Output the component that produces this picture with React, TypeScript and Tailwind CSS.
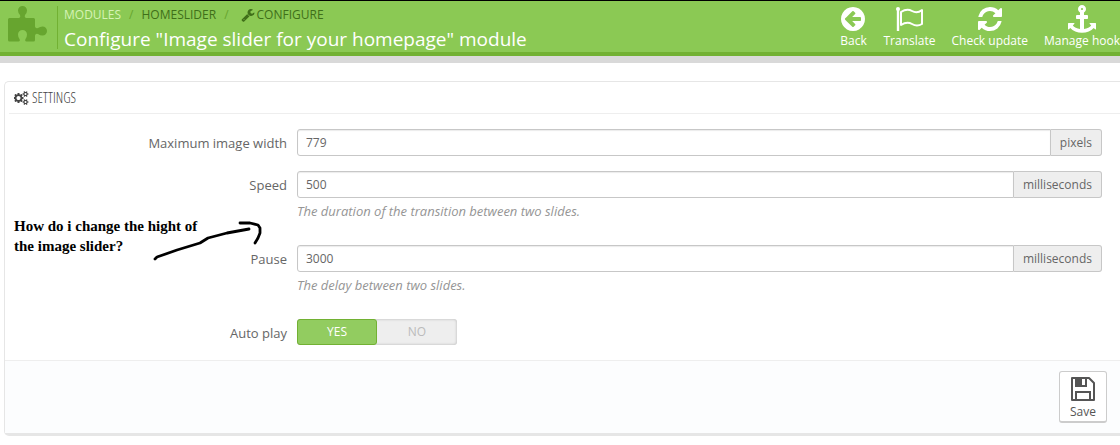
import type { ReactNode } from "react";

const ICONS = {
  back: "M1408 960v-128q0-26-19-45t-45-19h-502l189-189q19-19 19-45t-19-45l-91-91q-18-18-45-18t-45 18l-362 362-91 91q-18 18-18 45t18 45l91 91 362 362q18 18 45 18t45-18l91-91q18-18 18-45t-18-45l-189-189h502q26 0 45-19t19-45zm256-64q0 209-103 385.5t-279.5 279.5-385.5 103-385.5-103-279.5-279.5-103-385.5 103-385.5 279.5-279.5 385.5-103 385.5 103 279.5 279.5 103 385.5z",
  refresh:
    "M1639 1056q0 5-1 7-64 268-268 434.5t-478 166.5q-146 0-282.5-55t-243.5-157l-129 129q-19 19-45 19t-45-19-19-45v-448q0-26 19-45t45-19h448q26 0 45 19t19 45-19 45l-137 137q71 66 161 102t187 36q134 0 250-65t186-179q11-17 53-117 8-23 30-23h192q13 0 22.5 9.5t9.5 22.5zm25-800v448q0 26-19 45t-45 19h-448q-26 0-45-19t-19-45 19-45l138-138q-148-137-349-137-134 0-250 65t-186 179q-11 17-53 117-8 23-30 23h-199q-13 0-22.5-9.5t-9.5-22.5v-7q65-268 270-434.5t480-166.5q146 0 284 55.5t245 156.5l130-129q19-19 45-19t45 19 19 45z",
  anchor:
    "M960 256q0-26-19-45t-45-19-45 19-19 45 19 45 45 19 45-19 19-45zm832 928v352q0 22-20 30-8 2-12 2-13 0-23-9l-93-93q-119 143-318.5 226.5t-429.5 83.5-429.5-83.5-318.5-226.5l-93 93q-9 9-23 9-4 0-12-2-20-8-20-30v-352q0-14 9-23t23-9h352q22 0 30 20 8 19-7 35l-100 100q67 91 189.5 153.5t271.5 82.5v-647h-192q-26 0-45-19t-19-45v-128q0-26 19-45t45-19h192v-163q-58-34-93-92.5t-35-128.5q0-106 75-181t181-75 181 75 75 181q0 70-35 128.5t-93 92.5v163h192q26 0 45 19t19 45v128q0 26-19 45t-45 19h-192v647q149-20 271.5-82.5t189.5-153.5l-100-100q-15-16-7-35 8-20 30-20h352q14 0 23 9t9 23z",
  wrench:
    "M448 1472q0-26-19-45t-45-19-45 19-19 45 19 45 45 19 45-19 19-45zm644-420l-682 682q-37 37-90 37-52 0-91-37l-106-108q-38-36-38-90 0-53 38-91l681-681q39 98 114.5 173.5t173.5 114.5zm634-435q0 39-23 106-47 134-164.5 217.5t-258.5 83.5q-185 0-316.5-131.5t-131.5-316.5 131.5-316.5 316.5-131.5q58 0 121.5 16.5t107.5 46.5q16 11 16 28t-16 28l-293 169v224l193 107q5-3 79-48.5t135.5-81 70.5-35.5q15 0 23.5 10t8.5 25z",
  cogs: "M832 896q0-106-75-181t-181-75-181 75-75 181 75 181 181 75 181-75 75-181zm768 512q0-52-38-90t-90-38-90 38-38 90q0 53 37.5 90.5t90.5 37.5 90.5-37.5 37.5-90.5zm0-1024q0-52-38-90t-90-38-90 38-38 90q0 53 37.5 90.5t90.5 37.5 90.5-37.5 37.5-90.5zm-384 421v185q0 10-7 19.5t-16 10.5l-155 24q-11 35-32 76 34 48 90 115 7 11 7 20 0 12-7 19-23 30-82.5 89.5t-78.5 59.5q-11 0-21-7l-115-90q-37 19-77 31-11 108-23 155-7 24-30 24h-186q-11 0-20-7.5t-10-17.5l-23-153q-34-10-75-31l-118 89q-7 7-20 7-11 0-21-8-144-133-144-160 0-9 7-19 10-14 41-53t47-61q-23-44-35-82l-152-24q-10-1-17-9.5t-7-19.5v-185q0-10 7-19.5t16-10.5l155-24q11-35 32-76-34-48-90-115-7-11-7-20 0-12 7-20 22-30 82-89t79-59q11 0 21 7l115 90q34-18 77-32 11-108 23-154 7-24 30-24h186q11 0 20 7.5t10 17.5l23 153q34 10 75 31l118-89q8-7 20-7 11 0 21 8 144 133 144 160 0 8-7 19-12 16-42 54t-45 60q23 48 34 82l152 23q10 2 17 10.5t7 19.5zM1856 1338v140q0 16-149 31-12 27-30 52 51 113 51 138 0 4-4 7-122 71-124 71-8 0-46-47t-52-68q-20 2-30 2t-30-2q-14 21-52 68t-46 47q-2 0-124-71-4-3-4-7 0-25 51-138-18-25-30-52-149-15-149-31v-140q0-16 149-31 13-29 30-52-51-113-51-138 0-4 4-7 4-2 35-20t59-34 30-16q8 0 46 46.5t52 67.5q20-2 30-2t30 2q51-71 92-112l6-2q4 0 124 70 4 3 4 7 0 25-51 138 17 23 30 52 149 15 149 31zM1856 314v140q0 16-149 31-12 27-30 52 51 113 51 138 0 4-4 7-122 71-124 71-8 0-46-47t-52-68q-20 2-30 2t-30-2q-14 21-52 68t-46 47q-2 0-124-71-4-3-4-7 0-25 51-138-18-25-30-52-149-15-149-31v-140q0-16 149-31 13-29 30-52-51-113-51-138 0-4 4-7 4-2 35-20t59-34 30-16q8 0 46 46.5t52 67.5q20-2 30-2t30 2q51-71 92-112l6-2q4 0 124 70 4 3 4 7 0 25-51 138 17 23 30 52 149 15 149 31z",
};

function Icon({ name, className }: { name: keyof typeof ICONS; className: string }) {
  return (
    <svg viewBox={name === "cogs" ? "0 0 1920 1792" : "0 0 1792 1792"} fill="currentColor" className={className} aria-hidden="true">
      <path fillRule="evenodd" d={ICONS[name]} />
    </svg>
  );
}

function PuzzleIcon() {
  return (
    <svg viewBox="0 0 41 38" className="h-[38px] w-[41px] shrink-0" fill="#67a52f" aria-hidden="true">
      <path d="M1 14.500q0-1.500 1.500-1.500h9q2.500-.5 1.500-3q-2-2-2-4.500a4.500 4.500 0 0 1 9 0q0 2.500-2 4.500q-1 2.500 1.500 3h7q1.500 0 1.500 1.500v7q.5 2.500 3 1.500q2-1.500 4.500-1.500a4.500 4.500 0 0 1 0 9q-2.500 0-4.500-1.500q-2.500-1-3 1.500v4.500q0 1.500-1.500 1.500h-7q-2-.5-1-2.500q1.500-2 1.500-4.500a4.500 4.500 0 0 0-9 0q0 2.500 1.500 4.500q1 2-1 2.500h-9q-1.500 0-1.500-1.500z" />
    </svg>
  );
}

function FlagIcon() {
  return (
    <svg viewBox="0 0 30 26" className="h-[26px] w-[30px]" fill="none" stroke="currentColor" aria-hidden="true">
      <circle cx="4" cy="3" r="2" fill="currentColor" stroke="none" />
      <path d="M4 3v22" strokeWidth="2.400" />
      <path d="M7 6q6-4 11-1t10-1v14q-5 3-10 0t-11 1z" strokeWidth="2" strokeLinejoin="round" />
    </svg>
  );
}

function SaveIcon() {
  return (
    <svg viewBox="0 0 24 24" className="size-6" fill="none" stroke="currentColor" strokeWidth="2" aria-hidden="true">
      <path d="M1 1h17l5 5v17H1z" strokeLinejoin="round" />
      <path d="M5 23v-8h14v8" />
      <path d="M4 1h12v9H4z" fill="currentColor" stroke="none" />
      <path d="M11 2h3v6h-3z" fill="#fff" stroke="none" />
    </svg>
  );
}

function ToolbarButton({ label, children }: { label: string; children: ReactNode }) {
  return (
    <button type="button" className="flex shrink-0 flex-col items-center text-xs leading-4 whitespace-nowrap text-white">
      <span className="flex h-7 items-center justify-center">{children}</span>
      {label}
    </button>
  );
}

type FieldProps = {
  id: string;
  label: string;
  value: string;
  unit: string;
  help?: string;
};

function Field({ id, label, value, unit, help }: FieldProps) {
  return (
    <div className="flex gap-2.5">
      <label htmlFor={id} className="w-[282px] shrink-0 pt-1 text-right text-[13px] leading-5">
        {label}
      </label>
      <div className="min-w-0 flex-1">
        <div className="flex h-[27px]">
          <input
            id={id}
            type="text"
            defaultValue={value}
            className="min-w-0 flex-1 rounded-l-[3px] border border-[#c7c7c7] bg-white px-2 text-xs text-[#666] shadow-[inset_0_1px_1px_rgba(0,0,0,0.08)] outline-none"
          />
          <span className="flex items-center rounded-r-[3px] border border-l-0 border-[#c7c7c7] bg-[#eee] px-[9px] text-xs text-[#666]">
            {unit}
          </span>
        </div>
        {help && <p className="pt-[5px] text-[13px] leading-4 text-[#959595] italic">{help}</p>}
      </div>
    </div>
  );
}

export default function App() {
  return (
    <div className="overflow-hidden bg-white font-['Open_Sans',sans-serif] text-[#666]">
      <header className="flex h-14 items-start border-t border-b-4 border-t-black border-b-[#72b133] bg-[#8bc954]">
        <div className="flex min-w-0 flex-1 pl-[7px]">
          <div className="pt-1">
            <PuzzleIcon />
          </div>
          <div className="mt-[5px] ml-[9px] h-[43px] border-l border-[#72b133] pl-1.5">
            <nav className="flex gap-2 text-xs leading-[17px] text-[#3f6f19]">
              <a href="#modules" className="text-[#d6f3b5]">MODULES</a>
              <span className="text-[#67a52f]">/</span>
              <a href="#homeslider">HOMESLIDER</a>
              <span className="text-[#67a52f]">/</span>
              <a href="#configure" className="flex items-center gap-0.5 pl-1">
                <Icon name="wrench" className="size-3.5" />
                CONFIGURE
              </a>
            </nav>
            <h1 className="text-[19px] leading-8 whitespace-nowrap text-white">
              Configure "Image slider for your homepage" module
            </h1>
          </div>
        </div>
        <div className="flex shrink-0 gap-4 pt-1">
          <ToolbarButton label="Back">
            <Icon name="back" className="size-7" />
          </ToolbarButton>
          <ToolbarButton label="Translate">
            <FlagIcon />
          </ToolbarButton>
          <ToolbarButton label="Check update">
            <Icon name="refresh" className="size-7" />
          </ToolbarButton>
          <ToolbarButton label="Manage hook">
            <Icon name="anchor" className="size-7" />
          </ToolbarButton>
        </div>
      </header>
      <div className="h-[7px] bg-[#d9d9d9]" />

      <main className="pt-[18px] pl-1">
        <form className="relative rounded-l-[5px] border border-r-0 border-b-[3px] border-[#e6e6e6]">
          <h2 className="ml-1 flex h-8 items-center gap-[3px] border-b border-[#eee] pl-[5px] font-['Open_Sans_Condensed_Light','Roboto_Condensed','Open_Sans_Condensed',Roboto,sans-serif] text-sm font-normal text-[#444]">
            <Icon name="cogs" className="h-3.5 w-[15px]" />
            SETTINGS
          </h2>

          <div className="flex flex-col pt-[15px] pr-[18px] pb-[15px]">
            <Field id="width" label="Maximum image width" value="779" unit="pixels" />
            <div className="pt-[15px]">
              <Field id="speed" label="Speed" value="500" unit="milliseconds" help="The duration of the transition between two slides." />
            </div>
            <div className="pt-[26px]">
              <Field id="pause" label="Pause" value="3000" unit="milliseconds" help="The delay between two slides." />
            </div>
            <div className="flex gap-2.5 pt-[26px]">
              <span id="autoplay" className="w-[282px] shrink-0 pt-1 text-right text-[13px] leading-5">
                Auto play
              </span>
              <div role="radiogroup" aria-labelledby="autoplay" className="flex h-[26px] w-40 rounded-[3px] bg-[#eee] text-xs leading-6 shadow-[inset_0_0_3px_rgba(0,0,0,0.25)]">
                <label className="flex-1 rounded-[3px] border border-[#72b133] bg-[#92cc60] text-center text-white">
                  <input type="radio" name="autoplay" defaultChecked className="sr-only" />
                  YES
                </label>
                <label className="flex-1 border border-transparent text-center text-[#bbb]">
                  <input type="radio" name="autoplay" className="sr-only" />
                  NO
                </label>
              </div>
            </div>
          </div>

          <footer className="flex justify-end border-t border-[#eee] bg-[#fcfdfe] py-2.5 pr-[13px]">
            <button
              type="submit"
              className="flex h-[52px] w-12 flex-col items-center rounded-[3px] border border-b-2 border-[#ccc] bg-white pt-[5px] text-xs text-[#555]"
            >
              <SaveIcon />
              <span className="pt-[3px] leading-4">Save</span>
            </button>
          </footer>

          {/* handwritten note over the form */}
          <p className="absolute top-[134px] left-[9px] w-[200px] font-['Liberation_Serif',serif] text-[15px] leading-5 font-bold text-black">
            How do i change the hight of the image slider?
          </p>
          <svg viewBox="0 0 110 42" className="absolute top-[138px] left-[148px] h-[42px] w-[110px]" fill="none" stroke="#000" strokeWidth="2.800" strokeLinecap="round" strokeLinejoin="round" aria-hidden="true">
            <path d="M2 39l2-2l20-7l23-7l8-5l19-5l11-2l11-2" />
            <path d="M87 3l10 0l8 2l2 3v5l-2 5l-3 5" />
          </svg>
        </form>
      </main>
    </div>
  );
}
